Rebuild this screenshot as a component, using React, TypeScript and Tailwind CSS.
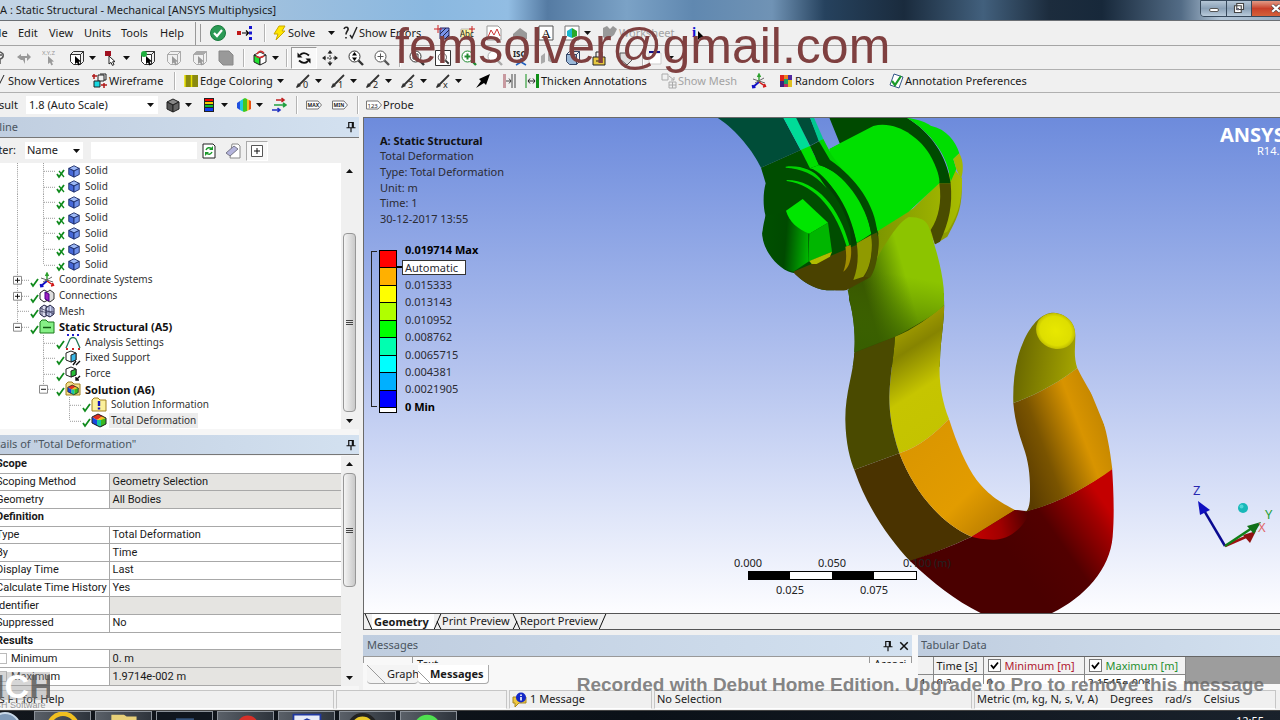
import type { ReactNode } from "react";
import clsx from "clsx";

type IconProps = { children: ReactNode; className?: string };

function Svg({ children, className = "w-4" }: IconProps) {
  return (
    <svg viewBox="0 0 16 16" className={clsx("h-4 shrink-0", className)} fill="none" aria-hidden="true">
      {children}
    </svg>
  );
}

function Cube({ top = "#fff", left = "#fff", right = "#fff", line = "#222" }) {
  return (
    <g stroke={line} strokeLinejoin="round">
      <path d="M8 2 14 5 8 8 2 5Z" fill={top} />
      <path d="M2 5 8 8V15L2 12Z" fill={left} />
      <path d="M14 5 8 8V15L14 12Z" fill={right} />
    </g>
  );
}

function BoxOutline({ line = "#333", face = "none", top = "none" }) {
  return (
    <g stroke={line}>
      <path d="M1.5 4.5 4.5 1.5H14.5L11.5 4.5Z" fill={top} />
      <path d="M11.5 4.5 14.5 1.5V11.5L11.5 14.5Z" />
      <path d="M1.5 4.5H11.5V14.5H4.5L1.5 11.5Z" fill={face} />
    </g>
  );
}

const Pointer = ({ fill = "#000", stroke = "none" }) => (
  <path d="M6 6 6 14 8 12.4 9.4 15.4 11 14.6 9.6 11.8 12 11.6Z" fill={fill} stroke={stroke} />
);

const Lens = ({ color = "#333", children }: { color?: string; children?: ReactNode }) => (
  <g stroke={color}>
    <circle cx="6.5" cy="6.5" r="5.5" fill="#fff" />
    <path d="M10.5 10.5 15 15" strokeWidth="2.4" />
    {children}
  </g>
);

const Axes = () => (
  <g strokeWidth="1.4">
    <path d="M8 9V1M6.5 4 8 1 9.5 4" stroke="#2ca02c" />
    <path d="M8 9 2 14M1.5 12 2 14.5 4.5 14" stroke="#1010c8" strokeWidth="1.8" />
    <path d="M8 9 14 13M12 14 14.5 13.3 13.5 11" stroke="#d01818" strokeWidth="1.5" />
    <path d="M2 6 14 10M13 5 4 10" stroke="#666" strokeWidth="1" />
  </g>
);

const Caret = () => (
  <svg viewBox="0 0 7 4" className="h-1 w-[7px] shrink-0" aria-hidden="true">
    <path d="M0 0H7L3.5 4Z" fill="#111" />
  </svg>
);

const Sep = () => <span className="mx-1 h-[18px] w-px shrink-0 bg-[#b4b4b4] shadow-[1px_0_0_#fff]" />;

interface ToolProps {
  name: string;
  icon?: ReactNode;
  text?: string;
  drop?: boolean;
  disabled?: boolean;
  className?: string;
}

function Tool({ name, icon, text, drop, disabled, className = "w-[26px] justify-center" }: ToolProps) {
  return (
    <button
      type="button"
      aria-label={name}
      disabled={disabled}
      className={clsx("flex h-[22px] shrink-0 items-center whitespace-nowrap", disabled && "text-[#a3a3a3]", className)}
    >
      {icon && <Svg>{icon}</Svg>}
      {text && <span className="ml-px">{text}</span>}
      {drop && <span className="ml-1"><Caret /></span>}
    </button>
  );
}

const MENU = ["File", "Edit", "View", "Units", "Tools", "Help"];
const MENU_WIDTHS = ["w-[28px]", "w-[31px]", "w-[35px]", "w-[37px]", "w-[39px]", "w-[35px]"];

function TitleBar() {
  return (
    <header className="flex h-[21px] shrink-0 items-center border-b border-[#6b6f74] bg-[linear-gradient(90deg,#c3d4e4_0%,#bcd1e4_16%,#9fc0de_22%,#8ab8e0_34%,#92bde3_40%,#557ba3_43%,#7ba2c6_49%,#6088b0_54%,#7093b5_60%,#26425e_64%,#1a2b3d_70%,#42607d_76%,#1c2c3d_81%,#17283a_85%,#536c86_91%,#b3c6d8_94%,#8fa5bb_100%)] pl-5 text-[#1d1d1d]">
      <h1 className="flex-1 whitespace-nowrap text-[11px]">A : Static Structural - Mechanical [ANSYS Multiphysics]</h1>
      <div className="-mt-1 flex h-[17px] w-[100px] overflow-hidden rounded-b border border-[#36485b]">
        <button type="button" aria-label="Minimize" className="flex w-[26px] items-center justify-center border-r border-[#36485b] bg-gradient-to-b from-[#b5c6d6] via-[#8aa0b6] to-[#b9cbdb]">
          <span className="mt-1 h-[4px] w-2.5 rounded-sm border border-[#555] bg-white" />
        </button>
        <button type="button" aria-label="Restore" className="flex w-[25px] items-center justify-center border-r border-[#36485b] bg-gradient-to-b from-[#b5c6d6] via-[#8aa0b6] to-[#b9cbdb]">
          <Svg className="w-3">
            <path d="M5 2H14V10H5ZM2 5H11V14H2Z" fill="#fff" stroke="#444" strokeWidth="1.5" />
            <path d="M5 8H8V11H5Z" fill="#667" />
          </Svg>
        </button>
        <button type="button" aria-label="Close" className="flex flex-1 items-center justify-center bg-gradient-to-b from-[#e19a86] via-[#c8402a] to-[#d4603a]">
          <Svg className="w-3"><path d="M3 4 13 13M13 4 3 13" stroke="#444" strokeWidth="4.5" /><path d="M3 4 13 13M13 4 3 13" stroke="#fff" strokeWidth="3" /></Svg>
        </button>
      </div>
    </header>
  );
}

function MenuRow() {
  return (
    <div className="flex h-[25px] items-center border-b border-[#a5a5a5] pl-[10px]">
      <nav className="flex items-center">
        {MENU.map((m, i) => (
          <button type="button" key={m} className={clsx("text-left", MENU_WIDTHS[i])}>{m}</button>
        ))}
      </nav>
      <span className="mr-1 h-[23px] w-px bg-[#999]" />
      <span className="mr-[5px] h-[18px] w-px bg-[#999]" />
      <Tool name="Ready" className="w-6 justify-center" icon={<><circle cx="8" cy="8" r="7.5" fill="#2b9a55" stroke="#187a3c" /><path d="M4 8 7 11 12 5" stroke="#fff" strokeWidth="2.2" /></>} />
      <Tool name="Connect" className="w-[30px] justify-center" icon={<><path d="M0 6h4v4H0Z" fill="#c01818" /><path d="M5 8h6M9 5.5 11.5 8 9 10.5" stroke="#000" strokeWidth="1.2" /><path d="M12 1h3v3h-3ZM12 6.5h3v3h-3ZM12 12h3v3h-3Z" fill="#1515d0" /></>} />
      <Sep />
      <Tool name="Solve" text="Solve" className="ml-0.5 w-[53px]" icon={<path d="M8 1 14 1 11 6H14L5 15 7 9H3Z" fill="#ffe600" stroke="#c9a800" />} />
      <Tool name="Solve options" drop className="w-[18px]" />
      <Tool name="Show Errors" text="Show Errors" className="w-[87px]" icon={<><path d="M2 4Q3 1.5 5.5 2.5 7 4 5 6.5 4 8 4 9.5M4 12V13.5" stroke="#222" strokeWidth="1.6" /><path d="M8 10 10 13 15 2" stroke="#222" strokeWidth="1.4" /></>} />
      <Tool name="Section plane" icon={<><path d="M6 3H15V14H6Z" fill="#7992e8" stroke="#226" /><path d="M6 9 12 3M7 13 15 5M11 14 15 10" stroke="#224" /><path d="M4 0V8M0 4H8" stroke="#c22" /></>} />
      <Tool name="Label" icon={<><path d="M1 4H12V14H1Z" fill="#fff3a0" stroke="#bbb" /><text x="0" y="12" fontSize="8" fill="#222">Abc</text><path d="M12 1V7M9 4H15" stroke="#c22" /></>} />
      <Tool name="Chart" icon={<><path d="M1 1H12L15 4V15H1Z" fill="#fff" stroke="#999" /><path d="M2 12 5 5 8 10 11 4 14 11" stroke="#c33" /></>} />
      <Tool name="Comment" disabled icon={<path d="M1 14V9L8 3 15 8V14Z" fill="#999" />} />
      <Tool name="Text" icon={<><path d="M1 1H15V15H1Z" fill="#fff" stroke="#555" /><text x="3.5" y="13" fontSize="13" fontFamily="Liberation Serif, serif" fill="#000">A</text></>} />
      <Tool name="Image" drop className="w-[43px] pl-[5px]" icon={<><path d="M1 1H15V15H1Z" fill="#fff" stroke="#777" /><path d="M3 6 8 3V13L3 11Z" fill="#17b8d0" /><path d="M8 3 13 6V11L8 13Z" fill="#28a828" /></>} />
      <Tool name="Worksheet" text="Worksheet" disabled className="w-[84px]" icon={<path d="M1 3 5 1 8 4 11 1 15 4 12 10 5 15 1 12Z" fill="#999" />} />
      <Tool name="Information" icon={<><text x="1" y="12" fontSize="15" fontWeight="bold" fontFamily="Liberation Serif, serif" fill="#1212d0">i</text><path d="M7 6V15L9 13 13 12Z" fill="#000" /></>} />
    </div>
  );
}

function GraphicsRow() {
  return (
    <div className="flex h-6 items-center border-b border-[#b0b0b0] pl-[6px]">
      <Tool name="Probe cursor" className="w-[25px] justify-center" icon={<path d="M5 4Q8 0 12 4 13 8 9 9V14M7 5h4" stroke="#555" strokeWidth="1.5" />} />
      <Tool name="Direction" disabled icon={<path d="M1 7 5 4V6H11V3L15 7 11 11V8H9V14L7 10 5 10Z" fill="#999" />} />
      <Tool name="Hit point" disabled icon={<><text x="0" y="5" fontSize="6" fill="#999">X,Y,Z</text><Pointer fill="#999" /></>} />
      <Tool name="Select type" drop className="w-[38px] pl-[6px]" icon={<><BoxOutline face="#fff" /><Pointer /></>} />
      <Tool name="Select mode" drop className="w-[34px] pl-0.5" icon={<><path d="M2 1H8V6H2Z" fill="#a01020" /><Pointer fill="#fff" stroke="#222" /></>} />
      <Tool name="Vertex" icon={<><BoxOutline face="#fff" /><circle cx="4" cy="4" r="3" fill="#20b040" /><Pointer /></>} />
      <Tool name="Edge" icon={<><BoxOutline line="#aaa" /><Pointer fill="#999" /></>} />
      <Tool name="Face" icon={<><BoxOutline line="#aaa" top="#aaa" /><Pointer fill="#999" /></>} />
      <Tool name="Body" icon={<path d="M1 1H11L15 5V15H5L1 11Z" fill="#999" stroke="#888" />} />
      <Sep />
      <Tool name="Extend selection" drop className="w-[34px] pl-1" icon={<><Cube left="#20e030" /><path d="M5 4Q8-1 12 3M4 6Q7 9 12 6" stroke="#d03030" strokeWidth="1.5" /></>} />
      <Sep />
      <Tool
        name="Rotate"
        className="w-[26px] justify-center border border-[#999] border-r-white border-b-white bg-[#f8f8f8]"
        icon={<><path d="M4 5Q8 1 13 5.5M12 11Q8 15 3 10.5" stroke="#111" strokeWidth="1.8" /><path d="M1.5 2.5V7.5H6.5ZM14.5 13.5V8.5H9.5Z" fill="#111" /></>}
      />
      <Tool name="Pan" icon={<><path d="M8 2V14M2 8H14" stroke="#333" strokeDasharray="2 1" /><path d="M8 0 10.5 3.5H5.5ZM8 16 5.5 12.5H10.5ZM0 8 3.5 5.5V10.5ZM16 8 12.5 10.5V5.5Z" fill="#222" /></>} />
      <Tool name="Zoom" icon={<Lens><path d="M6.5 2 9 5.5H4ZM6.5 11 4 7.5H9Z" fill="#000" stroke="none" /></Lens>} />
      <Tool name="Zoom in" icon={<Lens color="#555"><path d="M3.5 6.5H9.5M6.5 3.5V9.5" /></Lens>} />
      <Sep />
      <Tool name="Zoom fit" icon={<Lens><path d="M4 4H9V9H4Z" /></Lens>} />
      <Tool name="Box zoom" icon={<><path d="M0.5 0.5H15.5V15.5H0.5Z" stroke="#333" fill="#fff" /><g transform="translate(2.5 2.5) scale(.75)"><Lens /></g></>} />
      <Tool name="Magnifier" icon={<Lens color="#208a30"><path d="M3.5 6.5H9.5M6.5 3.5V9.5" strokeWidth="2" /></Lens>} />
      <Tool name="Previous view" disabled icon={<Lens color="#aaa" />} />
      <Tool name="ISO view" icon={<><text x="0" y="7" fontSize="8" fontWeight="bold" fill="#222">ISO</text><path d="M8 8V12L3 15M8 12 13 15" stroke="#2060c0" strokeWidth="1.5" /></>} />
      <Tool name="Look at" disabled icon={<path d="M2 6 6 3V12L2 14ZM9 3 14 6V13L9 11Z" fill="#aaa" />} />
      <Tool name="Manage views" icon={<BoxOutline line="#346" face="#9ab8d8" />} />
      <Tool name="Viewports" icon={<><path d="M2 7H14V15H2Z" fill="#e8c840" stroke="#222" /><path d="M5 7V2H11V7M5 11H11" stroke="#222" /></>} />
      <Tool name="Tag" icon={<path d="M3 3H9L15 10 10 15 3 9Z" fill="#ddd" stroke="#555" />} />
      <Sep />
      <Tool name="Background" drop className="w-[40px]" icon={<><path d="M2 3H14V14H2Z" fill="#fff" stroke="#ccc" /><path d="M2 2H13" stroke="#118" strokeWidth="2" /></>} />
    </div>
  );
}

const EDGE_MODES = ["0", "1", "2", "3", "x"];

function EdgeRow() {
  return (
    <div className="flex h-[23px] items-center border-b border-[#b0b0b0] pl-[11px]">
      <Tool name="Show Vertices" text="Show Vertices" className="w-[101px]" icon={<path d="M5 9 8 12 13 2" stroke="#222" />} />
      <Tool
        name="Wireframe"
        text="Wireframe"
        className="w-[78px]"
        icon={<><path d="M6 2H12V8H6ZM8 1H14V7H12" stroke="#222" /><path d="M2 8H8V14H2Z" fill="#18d8e0" stroke="#222" /><path d="M2 1V6M0 3H5M12 10V15M9 12H15" stroke="#b01818" strokeWidth="1.5" /></>}
      />
      <Sep />
      <Tool name="Edge Coloring" text="Edge Coloring" drop className="ml-1 w-[112px]" icon={<><path d="M2 2H15V14H2Z" fill="#8a8a10" /><path d="M2 2V14M8.5 2V14" stroke="#e8e000" strokeWidth="1.5" /></>} />
      {EDGE_MODES.map((n) => (
        <Tool
          key={n}
          name={"Edge mode " + n}
          drop
          className="w-[35px]"
          icon={<><path d="M2 14 14 2" stroke="#333" strokeWidth="1.8" /><path d="M1 15 6 13 3 10Z" fill="#333" /><text x="8" y="15" fontSize="9" fill="#222">{n}</text></>}
        />
      ))}
      <Tool name="Arrow" icon={<path d="M1 15 6 8 4 6 15 1 11 12 9 10Z" fill="#000" />} />
      <Tool name="Contact split" icon={<><path d="M2 1H5V15H2Z" fill="#c89aa0" /><path d="M11 1V15M14 1V15M5 8H10M8 5.5 10 8 8 10.5" stroke="#444" /></>} />
      <Tool name="Thicken Annotations" text="Thicken Annotations" className="ml-0.5 w-[137px]" icon={<><path d="M4 8H11M6 5.5 4 8 6 10.5M9 5.5 11 8 9 10.5" stroke="#222" /><path d="M12 1H15V15H12Z" fill="#109018" /><path d="M2 1V15" stroke="#109018" /></>} />
      <Tool name="Show Mesh" text="Show Mesh" disabled className="w-[85px]" icon={<path d="M1 1H7V7H1ZM8 3 13 7M13 4V7H10M8 9H15V15H8ZM11.5 9V15M8 12H15" stroke="#aaa" />} />
      <Tool name="Triad" icon={<Axes />} />
      <Tool name="Random Colors" text="Random Colors" className="ml-1.5 w-[110px]" icon={<><path d="M2 2H6V8H2Z" fill="#e02020" /><path d="M6 2H10V6H6Z" fill="#f08020" /><path d="M10 2H14V7H10Z" fill="#5028a0" /><path d="M2 8H6V14H2Z" fill="#402080" /><path d="M6 6H10V11H6Z" fill="#20a060" /><path d="M10 7H14V14H10Z" fill="#e0c020" /><path d="M6 11H10V14H6Z" fill="#c03060" /></>} />
      <Tool name="Annotation Preferences" text="Annotation Preferences" className="w-[145px]" icon={<><path d="M6 1 15 4 11 15 2 12Z" fill="#fff" stroke="#358" /><path d="M4 8 7 12 13 3" stroke="#1a9a2a" strokeWidth="2.2" /></>} />
    </div>
  );
}

function ResultRow() {
  return (
    <div className="flex h-6 items-center pl-[6px]">
      <label htmlFor="scale" className="w-10">Result</label>
      <div className="relative flex w-[132px] items-center bg-white">
        <select id="scale" className="h-[18px] w-full appearance-none bg-white pl-[3px]">
          <option>1.8 (Auto Scale)</option>
        </select>
        <span className="pointer-events-none absolute right-1"><Caret /></span>
      </div>
      <Tool name="Geometry" drop className="ml-[7px] w-[36px]" icon={<Cube top="#888" left="#555" right="#666" />} />
      <Tool
        name="Contours"
        drop
        className="w-[35px]"
        icon={<><path d="M3 1H13V15H3Z" fill="#222" /><path d="M4 2H12V4H4Z" fill="#f00" /><path d="M4 5H12V7H4Z" fill="#f0d000" /><path d="M4 8H12V10H4Z" fill="#10c030" /><path d="M4 11H12V14H4Z" fill="#1040f0" /></>}
      />
      <Tool name="Edges" drop className="w-[30px]" icon={<><path d="M1 6 4 4V13L1 11Z" fill="#2050e0" /><path d="M4 4 7 2V14.5L4 13Z" fill="#20c8e0" /><path d="M7 2 9 1 11 2V14L8 15 7 14.5Z" fill="#40c820" /><path d="M11 2 13 3V13L11 14Z" fill="#f0c020" /><path d="M13 3 15 4V12L13 13Z" fill="#e85010" /></>} />
      <Tool name="Vectors" icon={<g strokeWidth="1.6"><path d="M5 3H13M10.5 1 13 3 10.5 5" stroke="#c02020" /><path d="M3 8H15M12 6 15 8 12 10" stroke="#20a040" /><path d="M1 13H9M6.5 11 9 13 6.5 15" stroke="#2030c0" /></g>} />
      <Sep />
      {["MAX", "MIN"].map((t) => (
        <Tool key={t} name={t} icon={<><path d="M0.5 4H12L15.5 8 12 12H0.5Z" fill="#fff" stroke="#777" /><text x="1.5" y="10" fontSize="5" fontWeight="bold" fill="#222">{t}</text></>} />
      ))}
      <Sep />
      <Tool name="Probe" text="Probe" className="ml-1 w-[60px]" icon={<><path d="M0.5 4H12L15.5 8 12 12H0.5Z" fill="#fff" stroke="#777" /><text x="1.5" y="10.5" fontSize="6" fill="#222">123</text></>} />
    </div>
  );
}

const Pin = () => (
  <Svg className="w-3">
    <path d="M5 2H11V9H5ZM2 9H14M8 9V15" stroke="#111" strokeWidth="1.6" />
    <path d="M10 2V9" stroke="#111" strokeWidth="2" />
  </Svg>
);

function PanelHeader({ title, closable, className = "h-5" }: { title: string; closable?: boolean; className?: string }) {
  return (
    <div className={clsx("flex shrink-0 items-center gap-1 bg-gradient-to-r from-[#bfcddf] to-[#d3e1f0] pr-0.5 text-[#4a5560]", className)}>
      <h2 className="flex-1 truncate">{title}</h2>
      {title !== "Tabular Data" && <button type="button" aria-label="Pin"><Pin /></button>}
      {closable && (
        <button type="button" aria-label="Close panel">
          <Svg className="w-3"><path d="M3 3 13 13M13 3 3 13" stroke="#111" strokeWidth="2" /></Svg>
        </button>
      )}
    </div>
  );
}

type Guide = "none" | "line" | "tee" | "end" | "plus" | "minus";

interface TreeNode {
  label: string;
  guides: Guide[];
  icon: ReactNode;
  bold?: boolean;
  selected?: boolean;
  crossed?: boolean;
}

const solidIcon = <Cube top="#9db8f5" left="#4668d8" right="#6f90ea" line="#1a2a66" />;
const folder = (fill: string, line: string) => <path d="M1 14V3L3 1H7L9 3H15V14Z" fill={fill} stroke={line} />;
const colorCube = (
  <>
    <path d="M1 5 7 2 12 4 6 8Z" fill="#e03020" />
    <path d="M1 5 6 8V14L1 11Z" fill="#1848e0" />
    <path d="M6 8 12 4 15 6 10 9Z" fill="#f0c020" />
    <path d="M6 8 10 8V15L6 14Z" fill="#18c8a0" />
    <path d="M10 8 15 6V12L10 15Z" fill="#38b820" />
    <path d="M1 5 7 2 15 6V12L9 15 1 11Z" stroke="#222" />
  </>
);

const TREE: TreeNode[] = [
  ...Array.from({ length: 7 }, (_, i): TreeNode => ({
    label: "Solid",
    guides: ["line", i === 6 ? "end" : "tee"],
    icon: solidIcon,
    crossed: true,
  })),
  { label: "Coordinate Systems", guides: ["plus"], icon: <Axes /> },
  { label: "Connections", guides: ["plus"], icon: <><path d="M1 5 5 2 9 4V12L5 14 1 11Z" fill="#fff" stroke="#222" /><path d="M7 5 11 2 15 5V11L11 14 7 12Z" fill="#ddd" stroke="#333" /><path d="M6 4 10 6V13L6 11Z" fill="#a020c0" stroke="#408" /></> },
  { label: "Mesh", guides: ["tee"], icon: <><path d="M1 5 5 2 9 4V12L5 14 1 11Z" fill="#dde" stroke="#224" /><path d="M7 5 11 2 15 5V11L11 14 7 12Z" fill="#ccd4f4" stroke="#224" /><path d="M1 8 9 10M3 3V13M7 3V13M7 8 15 9M10 3V14M13 4V13M1 5 15 11" stroke="#335" strokeWidth=".7" /></> },
  { label: "Static Structural (A5)", guides: ["minus"], icon: <>{folder("#86f086", "#1c7a1c")}<path d="M4 8.5H12" stroke="#145c14" strokeWidth="1.5" /></>, bold: true },
  { label: "Analysis Settings", guides: ["none", "tee"], icon: <><path d="M1 14 5 5Q8 2 11 5L15 14" stroke="#275" strokeWidth="1.3" /><path d="M2 1H4M7 1H9M12 1H14" stroke="#22c" strokeWidth="2" /><path d="M1 15H3M7 15H9M13 15H15" stroke="#c22" strokeWidth="2" /></> },
  { label: "Fixed Support", guides: ["none", "tee"], icon: <><path d="M1 3 6 1 11 3V10L6 12 1 10Z" fill="#fff" stroke="#222" /><path d="M6 5 11 3V10L6 12Z" fill="#38b8e8" stroke="#222" /><path d="M8 15 11 11M11 15 15 11" stroke="#111" strokeWidth="1.4" /></> },
  { label: "Force", guides: ["none", "tee"], icon: <><path d="M1 3 6 1 11 3V9L6 11 1 9Z" fill="#fff" stroke="#222" /><path d="M6 5 11 3V9L6 11Z" fill="#28c038" stroke="#222" /><path d="M15 10 11 14M11 11V14H14" stroke="#111" strokeWidth="1.4" /></> },
  { label: "Solution (A6)", guides: ["none", "minus"], icon: <>{folder("#f6e088", "#a08020")}<g transform="translate(2 2.5) scale(.75)">{colorCube}</g></>, bold: true },
  { label: "Solution Information", guides: ["none", "none", "tee"], icon: <>{folder("#fbf09a", "#a08020")}<path d="M8 4V9M8 10.5V12.5" stroke="#1010c0" strokeWidth="2.4" /></> },
  { label: "Total Deformation", guides: ["none", "none", "end"], icon: colorCube, selected: true },
];

function GuideCell({ kind }: { kind: Guide }) {
  const box = kind === "plus" || kind === "minus";
  const short = kind === "end" || kind === "minus";
  return (
    <svg viewBox="0 0 26 16" preserveAspectRatio="none" className="h-full w-[26px] shrink-0 stroke-[#999]" fill="none" aria-hidden="true">
      {kind !== "none" && <path d={short ? "M13.5 0V8" : "M13.5 0V16"} strokeDasharray="1 1" />}
      {kind !== "none" && kind !== "line" && <path d="M14 8.5H26" strokeDasharray="1 1" />}
      {box && <path d="M9.5 4.5H17.5V12.5H9.5Z" fill="#fff" stroke="#888" />}
      {box && <path d={kind === "plus" ? "M11 8.5H16M13.5 6V11" : "M11 8.5H16"} stroke="#111" />}
    </svg>
  );
}

function ScrollBar({ thumb }: { thumb: string }) {
  return (
    <div className="flex w-[18px] shrink-0 flex-col bg-[#f0f0f0] pl-0.5">
      <span className="flex h-4 w-[13px] items-center justify-center"><span className="flex rotate-180"><Caret /></span></span>
      <div className="flex w-[13px] flex-1 flex-col">
        <div className={clsx("flex w-[13px] flex-col items-center justify-center gap-px rounded-sm border border-[#979797] bg-gradient-to-r from-[#f4f4f4] to-[#c9c9c9]", thumb)}>
          <i className="h-px w-[7px] bg-[#444]" />
          <i className="h-px w-[7px] bg-[#444]" />
          <i className="h-px w-[7px] bg-[#444]" />
        </div>
      </div>
      <span className="flex h-4 w-[13px] items-center justify-center"><Caret /></span>
    </div>
  );
}

function Outline() {
  return (
    <section className="flex flex-col">
      <PanelHeader title="Outline" className="h-[21px] border-b border-[#777]" />
      <div className="flex h-[25px] items-center bg-[#f0f0f0]">
        <label htmlFor="filter" className="w-[45px] pl-[7px]">Filter:</label>
        <div className="relative flex w-[58px] items-center">
          <select id="filter" className="h-[17px] w-full appearance-none bg-white pl-0.5">
            <option>Name</option>
          </select>
          <span className="pointer-events-none absolute right-[3px]"><Caret /></span>
        </div>
        <input aria-label="Filter text" className="ml-2 h-[17px] w-[106px] bg-white" />
        <button type="button" aria-label="Refresh" className="ml-1 w-6"><Svg><path d="M2 1H12L14 3V15H2Z" fill="#fff" stroke="#222" /><path d="M5 7Q7 3 11 6M11 9Q9 13 5 10" stroke="#1a9a2a" strokeWidth="1.5" /><path d="M12 3V7H8ZM4 13V9H8Z" fill="#1a9a2a" /></Svg></button>
        <button type="button" aria-label="Clear" className="w-6"><Svg><path d="M7 1H13L15 3V15H5Z" fill="#fff" stroke="#888" /><path d="M1 10 9 3 13 6 5 13Z" fill="#b4b4dc" stroke="#778" /></Svg></button>
        <button type="button" aria-label="Expand all" className="-ml-[3px] flex h-5 w-[22px] items-center justify-center border border-[#aaa] border-b-white border-r-white bg-[#f7f7f7]"><Svg><path d="M2.5 2.5H13.5V13.5H2.5Z" stroke="#555" fill="#fff" /><path d="M5 8H11M8 5V11" stroke="#111" /></Svg></button>
      </div>
      <div className="flex h-[266px] bg-white">
        <ul className="flex h-[265px] flex-1 flex-col pl-[24px] text-[10px] text-[#333]">
          {TREE.map((n, i) => (
            <li key={i} className="flex min-h-0 flex-1 items-center">
              {n.guides.map((g, k) => <GuideCell key={k} kind={g} />)}
              <svg viewBox="0 0 9 16" className="h-4 w-[9px] shrink-0" fill="none">
                <path d="M1 11 3 14 8 7" stroke="#0f8a1c" strokeWidth="1.8" />
                {n.crossed && <path d="M3 8 8 14" stroke="#0f8a1c" strokeWidth="1.3" />}
              </svg>
              <Svg className={n.crossed ? "mx-0.5 w-[14px]" : "w-4"}>{n.icon}</Svg>
              <span className={clsx("whitespace-nowrap px-0.5 leading-[15px]", n.bold && "text-[11px] font-bold text-[#111]", n.selected && "bg-[#ececec]", !n.crossed && "ml-0.5")}>{n.label}</span>
            </li>
          ))}
        </ul>
        <ScrollBar thumb="mt-[54px] h-[179px]" />
      </div>
    </section>
  );
}

interface Detail {
  name: string;
  value?: string;
  head?: boolean;
  readOnly?: boolean;
  check?: boolean;
}

const DETAILS: Detail[] = [
  { name: "Scope", head: true },
  { name: "Scoping Method", value: "Geometry Selection", readOnly: true },
  { name: "Geometry", value: "All Bodies", readOnly: true },
  { name: "Definition", head: true },
  { name: "Type", value: "Total Deformation" },
  { name: "By", value: "Time" },
  { name: "Display Time", value: "Last" },
  { name: "Calculate Time History", value: "Yes" },
  { name: "Identifier", value: "", readOnly: true },
  { name: "Suppressed", value: "No" },
  { name: "Results", head: true },
  { name: "Minimum", value: "0. m", readOnly: true, check: true },
  { name: "Maximum", value: "1.9714e-002 m", readOnly: true, check: true },
];

function Details() {
  return (
    <section className="mt-1.5 flex flex-col">
      <PanelHeader title={'Details of "Total Deformation"'} className="h-5 border-b border-[#777] pl-0.5" />
      <div className="mt-px flex h-[230px] bg-white">
        <table className="h-full flex-1 border-collapse text-left font-['Roboto',sans-serif] text-[11px] leading-[14px] text-[#1a1a1a]">
          <tbody>
            {DETAILS.map((d) => (
              <tr key={d.name} className="border-b border-[#a8a8a8]">
                <th scope="row" colSpan={d.head ? 2 : 1} className={clsx("whitespace-nowrap py-0 pl-4", d.head ? "font-bold" : "w-[129px] border-r border-[#a8a8a8] font-normal")}>
                  {d.check ? (
                    <label className="flex items-center gap-1">
                      <input type="checkbox" className="h-[11px] w-[11px] appearance-none border border-[#bbb] bg-white" />
                      {d.name}
                    </label>
                  ) : d.name}
                </th>
                {!d.head && <td className={clsx("py-0 pl-[3px]", d.readOnly && "bg-[#e5e4e1]")}>{d.value}</td>}
              </tr>
            ))}
          </tbody>
        </table>
        <ScrollBar thumb="mt-px h-[114px]" />
      </div>
    </section>
  );
}

const LEGEND = [
  { color: "bg-[#ff0000]", label: "0.019714 Max" },
  { color: "bg-[#ffb000]", label: "Automatic" },
  { color: "bg-[#ffff00]", label: "0.015333" },
  { color: "bg-[#b0ff00]", label: "0.013143" },
  { color: "bg-[#00ff00]", label: "0.010952" },
  { color: "bg-[#00ffb0]", label: "0.008762" },
  { color: "bg-[#00ffff]", label: "0.0065715" },
  { color: "bg-[#00b0ff]", label: "0.004381" },
  { color: "bg-[#0000ff]", label: "0.0021905" },
];

function Legend() {
  return (
    <div className="mt-3.5 flex pl-[7px] text-[11px] leading-[15px]">
      <span className="mt-2.5 h-[156px] w-1.5 border-y border-l border-[#222]" />
      <div className="ml-0.5 mt-[9px] flex h-[163px] w-[18px] flex-col border border-black bg-white pb-1">
        {LEGEND.map((l) => (
          <span key={l.label} className={clsx("flex-1 border-b border-black", l.color)} />
        ))}
      </div>
      <div className="flex h-[174px] flex-col">
        {LEGEND.map((l) => (
          <span key={l.label} className="flex min-h-0 flex-1 items-center">
            {l.label === "Automatic" ? (
              <>
                <span className="h-0.5 w-[5px] bg-black" />
                <span className="border border-[#333] bg-white pl-0.5 pr-[7px] leading-[13px]">{l.label}</span>
              </>
            ) : (
              <span className={clsx("whitespace-nowrap pl-2", l.label.endsWith("Max") && "font-bold text-black")}>{l.label}</span>
            )}
          </span>
        ))}
        <span className="flex min-h-0 flex-1 items-center pl-2 font-bold text-black">0 Min</span>
      </div>
    </div>
  );
}

function Hook() {
  return (
    <svg viewBox="364 118 916 496" className="absolute left-0 top-0 h-[496px] w-[916px]" aria-label="Deformed crane hook">
      <defs>
        <clipPath id="body">
          <path d="M147-75 147 0C165 60 168 110 163 160 160 220 135 280 136 360 137 430 150 480 165 515 200 620 270 720 330 783 400 850 470 905 548 942H750C850 895 930 810 938 710 944 640 940 560 936 500 925 400 900 320 880 290 855 250 840 220 832 205 820 170 826 140 826 110 828 60 790 38 755 38 720 42 690 80 670 125 645 180 638 250 640 310 645 370 660 410 675 455 692 510 690 560 690 590 690 610 686 625 680 633L645 630C600 605 570 590 530 540 500 500 470 430 447 357 425 300 415 240 420 180 422 110 435 60 432 0L432-75Z" />
        </clipPath>
        <linearGradient id="limb" gradientUnits="userSpaceOnUse" x1="500" y1="600" x2="640" y2="560">
          <stop offset=".1" stopColor="#355200" />
          <stop offset=".5" stopColor="#5a8800" />
          <stop offset="1" stopColor="#8cc400" />
        </linearGradient>
        <linearGradient id="limbLow" gradientUnits="userSpaceOnUse" x1="600" y1="480" x2="560" y2="700">
          <stop offset="0" stopColor="#4b7a00" stopOpacity="0" />
          <stop offset="1" stopColor="#386000" stopOpacity=".9" />
        </linearGradient>
        <linearGradient id="yellow" x1="0" y1="0" x2=".3" y2="1">
          <stop offset="0" stopColor="#8e8a00" />
          <stop offset=".2" stopColor="#a09c00" />
          <stop offset=".36" stopColor="#868400" />
          <stop offset=".65" stopColor="#c6c500" />
          <stop offset="1" stopColor="#c4c300" />
        </linearGradient>
        <linearGradient id="orange" x1="0" y1="0" x2="1" y2="1">
          <stop offset="0" stopColor="#d89400" />
          <stop offset=".6" stopColor="#e29c00" />
          <stop offset="1" stopColor="#a87000" />
        </linearGradient>
        <linearGradient id="orangeR" x1=".1" y1=".75" x2=".9" y2=".35">
          <stop offset="0" stopColor="#5a3c00" />
          <stop offset=".3" stopColor="#7a5400" />
          <stop offset=".7" stopColor="#d89400" />
          <stop offset="1" stopColor="#c08400" />
        </linearGradient>
        <linearGradient id="red" x1=".5" y1=".6" x2="1" y2=".35">
          <stop offset="0" stopColor="#4a0000" />
          <stop offset=".45" stopColor="#520000" />
          <stop offset=".85" stopColor="#a00000" />
          <stop offset="1" stopColor="#c40000" />
        </linearGradient>
        <linearGradient id="redSpot" x1="0" y1=".6" x2="1" y2=".5">
          <stop offset="0" stopColor="#c40000" />
          <stop offset=".5" stopColor="#a00000" />
          <stop offset="1" stopColor="#4e0000" />
        </linearGradient>
        <linearGradient id="tip" x1="0" y1=".4" x2="1" y2=".6">
          <stop offset="0" stopColor="#626000" />
          <stop offset="1" stopColor="#a8a800" />
        </linearGradient>
        <radialGradient id="ball">
          <stop offset="0" stopColor="#e8e800" />
          <stop offset=".8" stopColor="#dede00" />
          <stop offset="1" stopColor="#c0be00" />
        </radialGradient>
        <linearGradient id="nut" x1="0" y1=".5" x2="1" y2=".6">
          <stop offset="0" stopColor="#005000" />
          <stop offset=".5" stopColor="#004a00" />
          <stop offset="1" stopColor="#00b400" />
        </linearGradient>
        <linearGradient id="collar" x1="0" y1="0" x2="1" y2="0">
          <stop offset="0" stopColor="#6f8a00" />
          <stop offset="1" stopColor="#a8bc00" />
        </linearGradient>
      </defs>

      {/* hook, colour bands clipped to the silhouette */}
      <g transform="translate(800 300) scale(.33333)">
        <g clipPath="url(#body)">
          <path d="M100-75H380V-20H500V200H100Z" fill="#355200" />
          <path d="M285 110C340 90 390 50 440 10H480V345L447 357C410 395 360 440 298 460 275 390 268 340 268 290 270 220 282 170 285 110Z" fill="url(#yellow)" />
          <path d="M120 172 163 158 285 110C282 170 270 220 268 290 268 340 275 390 298 460L120 525Z" fill="#4a4a00" />
          <path d="M120 525 298 460C340 570 420 670 515 710 450 740 400 760 330 785L250 810Z" fill="#4a3300" />
          <path d="M298 460C360 440 410 395 447 357L560 500 660 622 645 632 515 710C420 670 340 570 298 460Z" fill="url(#orange)" />
          <path d="M320 785C400 760 450 740 515 710L645 630 680 633C770 610 870 560 945 497V945H320Z" fill="url(#red)" />
          <path d="M515 710 645 630 690 633C670 690 620 720 580 719 550 718 530 715 515 710Z" fill="url(#redSpot)" />
          <path d="M630 313C710 285 780 245 840 198L960 490C870 560 770 610 675 636L690 560Z" fill="url(#orangeR)" />
          <path d="M630 313C710 285 780 245 840 198V20H630Z" fill="url(#tip)" />
          <ellipse cx="767" cy="93" rx="60" ry="53" fill="url(#ball)" transform="rotate(25 767 93)" />
        </g>
      </g>

      {/* clevis, pin and nut */}
      <g transform="translate(700 115) scale(.33333)">
        <path d="M783 185C790 250 780 290 760 330L742 365 705 388 680 330 700 230Z" fill="#8d9c00" />
        <path d="M640 280 760 160 786 190C788 260 770 310 742 350L695 370 560 480 450 500 460 390Z" fill="url(#collar)" />
        <path d="M718 205H752C758 270 748 320 720 380L705 388 692 345C716 310 726 260 718 205Z" fill="#4a4c00" />
        <path d="M388 8 420 87 390 102 440 180 520 120 620 60 718 205H752C740 120 690 50 620 8Z" fill="#004a00" />
        <path d="M620 8C650 12 680 22 692 32 740 42 768 80 778 115L760 132 769 162 752 200C745 120 690 50 620 8Z" fill="#00de00" />
        <path d="M760 132 778 115C792 140 790 170 783 192L769 162Z" fill="#a2b800" />
        <path d="M388 102 420 85 520 33C590 15 660 70 690 120 712 160 720 190 718 205L626 290 530 350 470 385 400 220Z" fill="#00e000" />
        <path d="M548 400C580 350 600 320 626 306 660 306 680 315 688 340 700 380 725 450 731 520 733 560 732 575 731 572 700 600 660 625 583 665L463 712C468 640 455 580 443 525L500 485Z" fill="url(#limb)" />
        <path d="M520 470H726C733 520 733 560 731 572 700 600 660 625 583 665L463 712C468 640 455 580 443 525Z" fill="url(#limbLow)" />
        <path d="M52 8H250L302 105 183 158C160 110 110 45 52 8Z" fill="#004d38" />
        <path d="M183 158 302 105 390 150 500 260 535 355 530 400 440 500C420 528 400 526 380 526 340 522 300 495 285 475 240 470 190 410 187 360 188 330 196 310 196 300 188 270 190 230 197 205Z" fill="#004d00" />
        <path d="M280 470 535 362C540 400 530 450 505 490L440 525C430 528 400 526 380 526 340 522 310 500 285 478Z" fill="#4a4200" />
        <path d="M250 8H290L330 95 302 105Z" fill="#00dc98" />
        <path d="M288 8H330L358 77 330 92Z" fill="#004d38" />
        <path d="M330 8H342L370 72 357 80Z" fill="#00c890" />
        <path d="M302 105 330 93 357 150 330 160Z" fill="#00e000" />
        <path d="M357 78 370 72 395 120 440 180 420 165 380 130Z" fill="#00d400" />
        <path d="M330 160 357 150C430 170 500 270 514 356L470 385C450 290 380 170 330 160Z" fill="#00e000" />
        <path d="M330 93 357 79 390 135C470 190 525 270 532 352L514 358C500 270 450 180 357 150Z" fill="#004a00" />
        <path d="M470 385 514 360C520 410 510 460 490 485L460 495C474 460 476 420 470 385Z" fill="#909a00" />
        <path d="M532 352C538 410 530 460 510 488L494 485C514 450 520 410 514 360Z" fill="#4a5000" />
        <path d="M257 155C350 155 420 240 450 340L455 392 470 385C450 270 380 165 300 155Z" fill="#004000" />
        <path d="M257 155C300 150 340 165 360 190L380 220C345 175 300 160 257 158Z" fill="#00d400" />
        <path d="M260 195C350 195 420 280 448 390L440 395C410 290 350 210 260 198Z" fill="#00dc00" />
        <path d="M436 395 452 390C458 430 446 460 430 470 440 440 440 420 436 395Z" fill="#a08c00" />
        <path d="M200 303 258 287 325 350V440L280 470C230 460 190 400 187 355Z" fill="url(#nut)" />
        <path d="M258 287 308 252 384 323 328 356C290 340 268 320 258 287Z" fill="#00e600" />
        <path d="M328 356 384 323 396 410 325 440Z" fill="#00b600" />
        <path d="M328 438 396 410 390 425 350 447 335 447Z" fill="#b0bc00" />
      </g>

      {/* triad */}
      <g>
        <path d="M1225 546 1202 507" stroke="#0a0a90" strokeWidth="2.5" />
        <path d="M1198 501 1200 515 1210 510Z" fill="#1010c0" />
        <path d="M1225 546 1248 536" stroke="#a01010" strokeWidth="2.5" />
        <path d="M1243 535 1256 531 1250 543Z" fill="#901010" />
        <path d="M1225 546 1252 528" stroke="#108018" strokeWidth="2.5" />
        <path d="M1247 526 1261 522 1254 534Z" fill="#107018" />
        <circle cx="1243" cy="508" r="5" fill="#18b8b8" />
        <circle cx="1241.5" cy="506.5" r="2" fill="#50d8d8" />
        <g fontSize="13">
          <text x="1193" y="495" fill="#2828b0">Z</text>
          <text x="1265" y="519" fill="#28a038">Y</text>
          <text x="1258" y="532" fill="#e06868">X</text>
        </g>
      </g>
    </svg>
  );
}

function ScaleBar() {
  return (
    <div className="absolute bottom-4 left-[342px] w-[252px] text-[11px] leading-[14px] text-[#222]">
      <div className="grid grid-cols-3 text-center">
        <span>0.000</span>
        <span>0.050</span>
        <span className="whitespace-nowrap pl-[22px]">0.100 (m)</span>
      </div>
      <div className="mx-auto mt-px grid h-[9px] w-[169px] grid-cols-4 border border-black">
        <i className="bg-black" />
        <i className="bg-white" />
        <i className="bg-black" />
        <i className="bg-white" />
      </div>
      <div className="mx-auto mt-[3px] grid w-[168px] grid-cols-2 text-center">
        <span>0.025</span>
        <span>0.075</span>
      </div>
    </div>
  );
}

function Viewport() {
  return (
    <section className="relative flex-1 overflow-hidden border-l border-t border-[#6a6a6a] bg-gradient-to-b from-[#6d8bdc] via-[#b3c2ee] to-[#fdfdff]">
      <Hook />
      <div className="relative flex flex-col pt-[15px] text-[#2b2b33]">
        <ul className="flex h-[94px] flex-col pl-4 text-[11px]">
          {["A: Static Structural", "Total Deformation", "Type: Total Deformation", "Unit: m", "Time: 1", "30-12-2017 13:55"].map((t, i) => (
            <li key={t} className={clsx("flex min-h-0 flex-1 items-center", i === 0 && "font-bold text-[#111]")}>{t}</li>
          ))}
        </ul>
        <Legend />
      </div>
      <ScaleBar />
      <div className="absolute -right-2 top-[6px] w-[68px] text-white">
        <p className="text-[20px] font-bold leading-[22px]">ANSYS</p>
        <p className="-mt-0.5 pl-[37px] text-[11px] leading-[14px]">R14.5</p>
      </div>
    </section>
  );
}

function ViewTabs() {
  return (
    <div className="flex h-[17px] shrink-0 items-center whitespace-nowrap border-b border-l border-t border-[#555] bg-[#f0f0f0] text-[11px]">
      <svg viewBox="0 0 8 16" className="h-[15px] w-2"><path d="M1 0 8 16" stroke="#000" /></svg>
      <button type="button" className="w-[62px] bg-white pl-0.5 text-left font-bold leading-[15px]">Geometry</button>
      <svg viewBox="0 0 8 16" className="h-[15px] w-2"><path d="M0 16 7 0M3 8 7 16" stroke="#000" fill="none" /></svg>
      <button type="button" className="w-[70px] text-left">Print Preview</button>
      <svg viewBox="0 0 8 16" className="h-[15px] w-2"><path d="M1 0 8 16M1 16 5 8" stroke="#000" fill="none" /></svg>
      <button type="button" className="w-[79px] text-left">Report Preview</button>
      <svg viewBox="0 0 8 16" className="h-[15px] w-2"><path d="M0 16 7 0" stroke="#000" /></svg>
    </div>
  );
}

function Messages() {
  return (
    <section className="flex w-[549px] shrink-0 flex-col overflow-hidden">
      <PanelHeader title="Messages" closable className="h-[21px] pl-1" />
      <div className="flex h-[7px] overflow-hidden border border-b-0 border-[#999] text-[11px] leading-[13px]">
        <span className="w-[49px] border-r border-[#999]" />
        <span className="flex-1 pl-1">Text</span>
        <span className="w-[42px] border-l border-[#999] pl-1">Associ</span>
      </div>
      <div className="flex h-[27px] items-start pl-1 pt-0.5">
        <div className="flex h-[19px] items-center rounded-b border-b border-[#aaa] bg-[#f4f4f4]">
          <svg viewBox="0 0 20 19" className="h-[19px] w-5"><path d="M0 0 18 18" stroke="#999" /></svg>
          <button type="button" className="w-[31px]">Graph</button>
        </div>
        <div className="flex h-[19px] items-center rounded-b border-b border-r border-[#aaa] bg-white">
          <svg viewBox="0 0 12 19" className="h-[19px] w-3"><path d="M-6 0 12 18" stroke="#999" /></svg>
          <button type="button" className="w-[58px] text-left font-bold">Messages</button>
        </div>
      </div>
    </section>
  );
}

function CheckBox({ label }: { label: string }) {
  return (
    <label className="flex items-center gap-1 pl-1">
      <span className="relative flex h-[13px] w-[13px] items-center">
        <input type="checkbox" defaultChecked className="h-[13px] w-[13px] appearance-none border border-[#777] bg-white" />
        <svg viewBox="0 0 13 13" className="pointer-events-none absolute inset-0" fill="none"><path d="M3 6 5.5 9 10 3.5" stroke="#000" strokeWidth="1.8" /></svg>
      </span>
      {label}
    </label>
  );
}

function Tabular() {
  const cell = "border-r border-[#888] py-0 font-normal whitespace-nowrap";
  return (
    <section className="flex flex-1 flex-col">
      <PanelHeader title="Tabular Data" className="h-[21px] pl-[3px]" />
      <div className="h-[28px] overflow-hidden border-t border-[#666] bg-[#9d9d9d]">
        <table className="border-collapse bg-white text-[11px] leading-[15px]">
          <thead>
            <tr className="h-[17px] border-b border-[#888] bg-[#f2f2f2]">
              <th className={clsx(cell, "w-[15px]")} />
              <th scope="col" className={clsx(cell, "w-[50px] pl-[3px] text-left")}>Time [s]</th>
              <th scope="col" className={clsx(cell, "w-[101px] text-[#b01830]")}><CheckBox label="Minimum [m]" /></th>
              <th scope="col" className={clsx(cell, "w-[101px] text-[#1f8f2f]")}><CheckBox label="Maximum [m]" /></th>
            </tr>
          </thead>
          <tbody>
            <tr>
              <td className={clsx(cell, "bg-[#f2f2f2] pl-0.5")}>1</td>
              <td className={clsx(cell, "pl-[3px]")}>0.2</td>
              <td className={clsx(cell, "pl-[3px]")}>0.</td>
              <td className={clsx(cell, "pl-[3px]")}>2.1545e-003</td>
            </tr>
          </tbody>
        </table>
      </div>
    </section>
  );
}

function StatusBar() {
  const cell = "flex h-[19px] items-center border border-[#c6c6c6] border-b-white pl-0.5 whitespace-nowrap";
  return (
    <footer className="flex h-5 shrink-0 gap-0.5 bg-[#f0f0f0]">
      <span className={clsx(cell, "-ml-1.5 w-[360px]")}>Press F1 for Help</span>
      <span className={clsx(cell, "w-[171px]")} />
      <span className={clsx(cell, "w-[143px] gap-0.5")}>
        <Svg><path d="M1 5H14V11H7L3 15V11H1Z" fill="#f0c840" stroke="#a88820" /><circle cx="9" cy="5.5" r="5" fill="#1428c8" /><path d="M9 2.5V4M9 5V8.5" stroke="#fff" strokeWidth="1.6" /></Svg>
        1 Message
      </span>
      <span className={clsx(cell, "flex-1")}>No Selection</span>
      <span className={clsx(cell, "w-[302px] gap-3")}>
        <span>Metric (m, kg, N, s, V, A)</span>
        <span>Degrees</span>
        <span>rad/s</span>
        <span>Celsius</span>
      </span>
      <span className="w-[22px]" />
    </footer>
  );
}

const TASKS = [
  <circle cx="28" cy="18" r="16" fill="none" stroke="#f0c020" strokeWidth="5" key="ie" />,
  <path key="folder" d="M14 3H28L31 5H42V12H14Z" fill="#e8d078" />,
  <path key="blank" d="M18 7H38V12H18Z" fill="#34527a" />,
  <circle key="rec" cx="30" cy="16" r="12" fill="#d83028" />,
  <path key="save" d="M13 3H43V12H37L28 8 20 12H13Z" fill="#e8ecf8" stroke="#2038a0" strokeWidth="2" />,
  <circle key="ansys" cx="22" cy="18" r="15" fill="#e8c828" stroke="#222" strokeWidth="4" />,
  <circle key="green" cx="26" cy="18" r="15" fill="#50e050" />,
];

function TaskBar() {
  return (
    <div className="flex h-[10px] shrink-0 items-start overflow-hidden border-t border-[#444] bg-gradient-to-r from-[#12161c] via-[#0b1118] to-[#1a222c] pl-5 text-white">
      <svg viewBox="0 0 34 10" className="h-[10px] w-[34px] shrink-0"><circle cx="5" cy="17" r="15" fill="#7f9ab8" stroke="#c8d8e8" strokeWidth="2" /></svg>
      {TASKS.map((t, i) => (
        <button type="button" key={i} aria-label={"Task " + (i + 1)} className={clsx("mr-1 h-[10px] w-[57px] shrink-0 border-x border-t border-[#8a9098]", i === 2 ? "bg-[#10161e]" : "bg-gradient-to-r from-[#5a6068] to-[#2e343c]")}>
          <svg viewBox="0 0 55 10" className="h-[9px] w-full">{t}</svg>
        </button>
      ))}
      <time className="ml-auto mr-9 mt-1 text-[11px] leading-[12px]">12:55</time>
    </div>
  );
}

export default function App() {
  return (
    <div className="relative h-screen min-h-[720px] overflow-hidden font-['Noto_Sans','Open_Sans',sans-serif] text-[11px] text-[#1a1a1a]">
      <div className="-mx-5 flex h-full flex-col bg-[#f0f0f0]">
        <TitleBar />
        <div className="h-24 shrink-0">
          <MenuRow />
          <GraphicsRow />
          <EdgeRow />
          <ResultRow />
        </div>
        <main className="flex min-h-0 flex-1">
          <div className="mr-1 flex w-[379px] shrink-0 flex-col bg-[#f6f6f6]">
            <Outline />
            <Details />
          </div>
          <div className="flex min-w-0 flex-1 flex-col">
            <div className="mr-5 flex min-h-0 flex-1 flex-col">
              <Viewport />
            </div>
            <ViewTabs />
            <div className="mt-[5px] flex h-[55px] shrink-0 gap-1.5 bg-[#f8f8f8]">
              <Messages />
              <Tabular />
            </div>
          </div>
        </main>
        <StatusBar />
        <TaskBar />
      </div>

      {/* watermarks over the whole window */}
      <p className="pointer-events-none absolute left-[395px] top-[18px] font-['Liberation_Sans',sans-serif] text-[50px] leading-[56px] text-[#7f4040]">femsolver@gmail.com</p>
      <p className="pointer-events-none absolute bottom-6 right-4 whitespace-nowrap font-['Liberation_Sans',sans-serif] text-[19px] font-bold leading-[22px] text-[#666]/80">
        Recorded with Debut Home Edition. Upgrade to Pro to remove this message
      </p>
      <div className="pointer-events-none absolute bottom-[10px] left-0 w-[50px] overflow-hidden font-['Liberation_Sans',sans-serif]">
        <p className="-ml-5 flex h-7 w-[70px] items-center bg-[#999]/40 text-[34px] font-bold leading-7 text-[#555]/80">
          N<span className="text-white">C</span>H
        </p>
        <p className="-ml-3 whitespace-nowrap text-[9px] leading-[10px] text-[#555]/60">NCH Software</p>
      </div>
    </div>
  );
}
